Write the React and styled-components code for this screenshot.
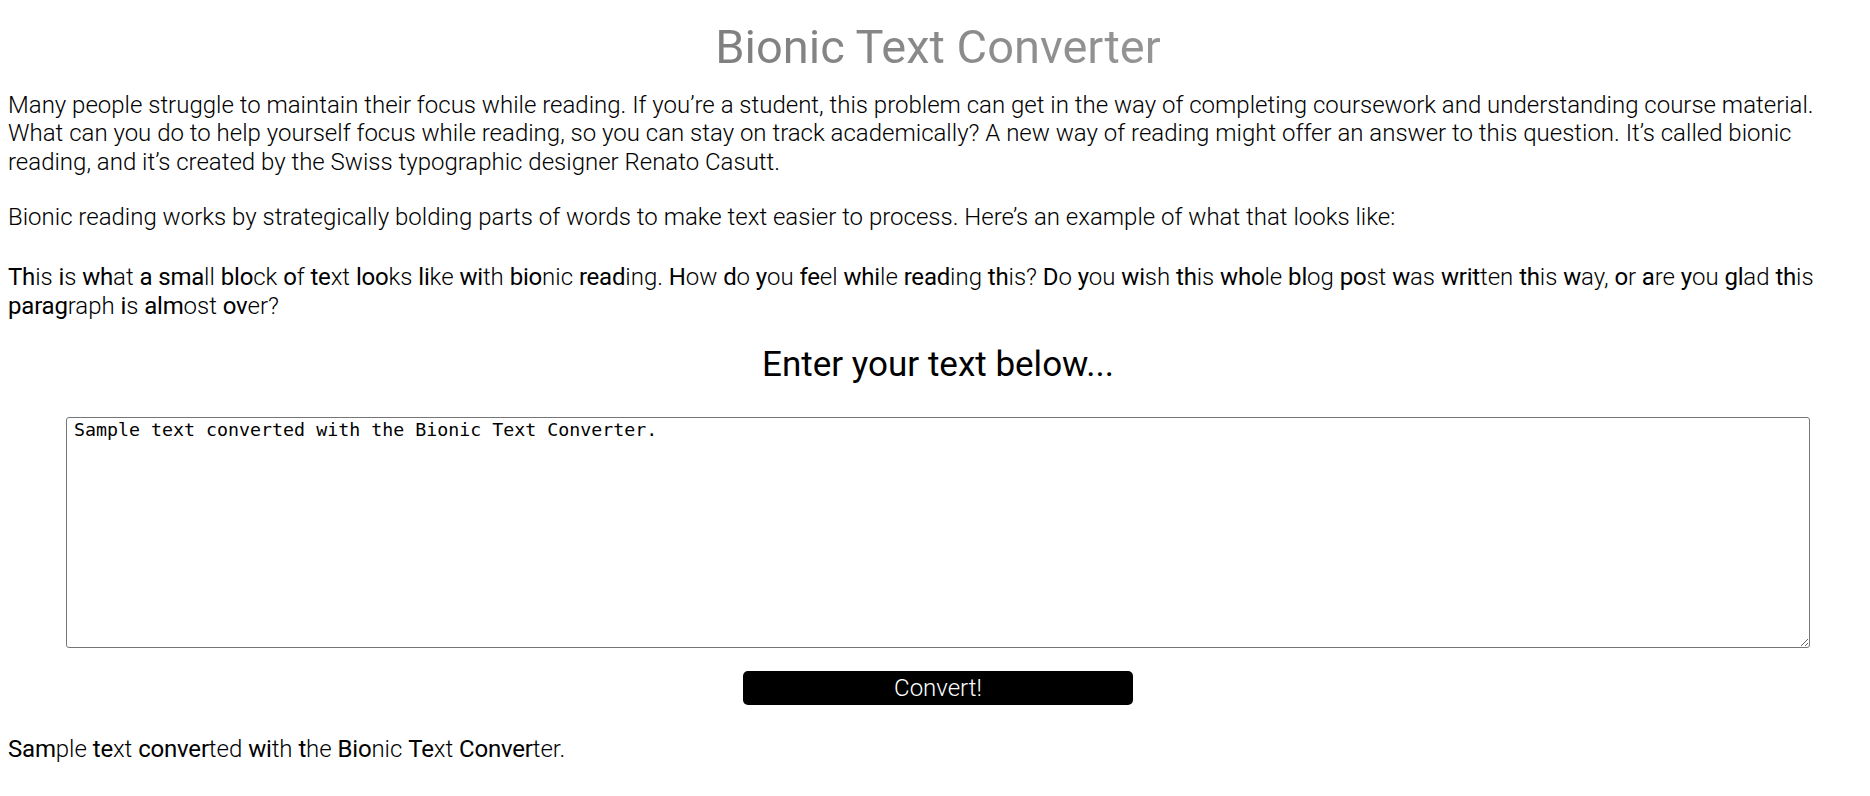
import React, { useState } from 'react'
import styled, { createGlobalStyle } from 'styled-components'

const GlobalStyle = createGlobalStyle`
  body {
    margin: 8px;
    background: #fff;
    color: #000;
    font-family: Roboto, 'Noto Sans', sans-serif;
    font-weight: 300;
    font-size: 24px;
    line-height: 1.2;
  }
`

const Page = styled.div`
  margin-right: -6px;
`

const Title = styled.h1`
  margin: 10.5px 0 16px;
  font-size: 47px;
  line-height: 56px;
  font-weight: 400;
  text-align: center;
  color: #888;
`

const TitleText = styled.span`
  background: linear-gradient(90deg, #7f7f7f 0%, #959595 100%);
  -webkit-background-clip: text;
  background-clip: text;
  color: transparent;
`

const Para = styled.p`
  margin: 0 6px ${(p) => p.$gap || '28.8px'} 0;
`

const Bold = styled.b`
  font-weight: 400;
  letter-spacing: -0.2px;
`

const Heading = styled.h2`
  margin: 0 0 31px;
  font-size: 35px;
  line-height: 42px;
  font-weight: 400;
  text-align: center;
`

const TextBox = styled.textarea`
  display: block;
  box-sizing: border-box;
  width: calc(100% - 116px);
  height: 231px;
  margin: 0 auto;
  padding: 1px 7px;
  border: 1px solid #767676;
  border-radius: 3px;
  font-family: 'DejaVu Sans Mono', 'Liberation Mono', monospace;
  font-size: 18.3px;
  line-height: 21px;
  color: #000;
  resize: both;
`

const ButtonRow = styled.div`
  display: flex;
  justify-content: center;
  margin: 23px 0 30.7px;
`

const ConvertButton = styled.button`
  width: 390px;
  height: 34px;
  padding: 0;
  border: none;
  border-radius: 5px;
  background: #000;
  color: #fff;
  font-family: Roboto, 'Noto Sans', sans-serif;
  font-weight: 300;
  font-size: 24px;
  cursor: pointer;
`

// text with **bold** marks -> spans
const Bionic = ({ source }) =>
  source.split(/\*\*(.+?)\*\*/).map((part, i) =>
    i % 2 ? <Bold key={i}>{part}</Bold> : <React.Fragment key={i}>{part}</React.Fragment>
  )

const toBionic = (text) =>
  text
    .split(/(\s+)/)
    .map((w) => {
      const letters = w.replace(/[^A-Za-z]/g, '').length
      if (!letters) return w
      const n = Math.max(1, Math.round(letters * 0.6))
      return `**${w.slice(0, n)}**${w.slice(n)}`
    })
    .join('')

const example =
  '**Th**is **i**s **wh**at **a** **sma**ll **blo**ck **o**f **te**xt **loo**ks **li**ke **wi**th **bio**nic **read**ing. **H**ow **d**o **y**ou **fe**el **whi**le **read**ing **th**is? **D**o **y**ou **wi**sh **th**is **who**le **bl**og **po**st **w**as **writ**ten **th**is **w**ay, **o**r **a**re **y**ou **gl**ad **th**is **parag**raph **i**s **alm**ost **ov**er?'

const sample = 'Sample text converted with the Bionic Text Converter.'
const sampleOut =
  '**Sam**ple **te**xt **conver**ted **wi**th **t**he **Bio**nic **Te**xt **Conver**ter.'

const App = () => {
  const [text, setText] = useState(sample)
  const [output, setOutput] = useState(sampleOut)

  return (
    <Page>
      <GlobalStyle />
      <Title>
        <TitleText>Bionic Text Converter</TitleText>
      </Title>
      <Para $gap="26.3px">
        Many people struggle to maintain their focus while reading. If you’re a student, this
        problem can get in the way of completing coursework and understanding course material.
        What can you do to help yourself focus while reading, so you can stay on track
        academically? A new way of reading might offer an answer to this question. It’s called
        bionic reading, and it’s created by the Swiss typographic designer Renato Casutt.
      </Para>
      <Para $gap="31.2px">
        Bionic reading works by strategically bolding parts of words to make text easier to
        process. Here’s an example of what that looks like:
      </Para>
      <Para $gap="22.8px">
        <Bionic source={example} />
      </Para>
      <Heading>Enter your text below...</Heading>
      <TextBox value={text} onChange={(e) => setText(e.target.value)} spellCheck={false} />
      <ButtonRow>
        <ConvertButton onClick={() => setOutput(toBionic(text))}>Convert!</ConvertButton>
      </ButtonRow>
      <Para>
        <Bionic source={output} />
      </Para>
    </Page>
  )
}

export default App
